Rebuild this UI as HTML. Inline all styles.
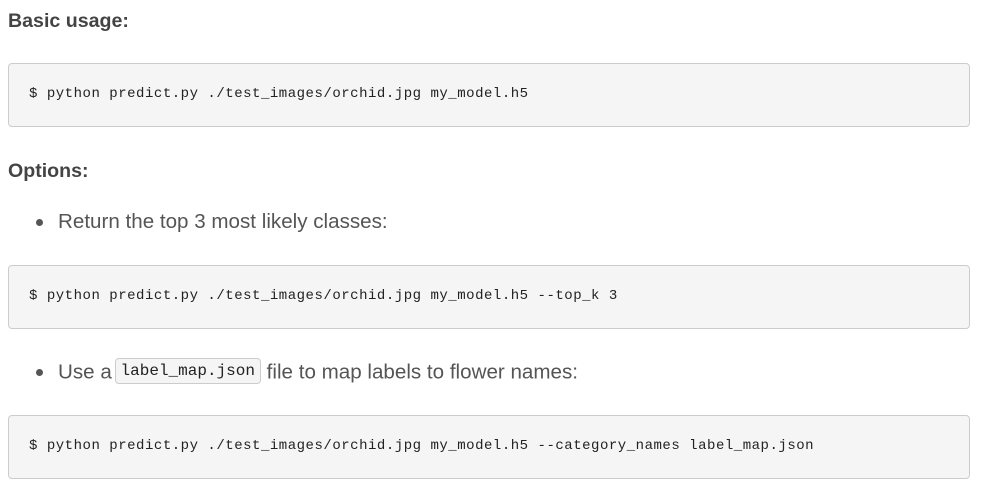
<!DOCTYPE html>
<html><head><style>
body{margin:0;background:#fff;width:986px;height:492px;position:relative;overflow:hidden;font-family:"Liberation Sans",sans-serif}
.h{position:absolute;left:8px;font-weight:bold;font-size:19.6px;color:#444}
.pre{position:absolute;left:8px;width:962px;height:64px;background:#f5f5f5;border:1px solid #ccc;border-radius:4px;box-sizing:border-box}
.pre span{position:absolute;left:20px;top:22px;font-family:"Liberation Mono",monospace;font-size:14px;letter-spacing:0.52px;color:#222;white-space:pre}
.li{position:absolute;left:58px;font-size:20.6px;color:#555;white-space:nowrap}
.dot{position:absolute;left:36px;width:7px;height:7px;border-radius:50%;background:#555}
.code{display:inline-block;font-family:"Liberation Mono",monospace;font-size:16px;background:#f5f5f5;border:1px solid #ccc;border-radius:4px;padding:3px 5px;color:#222;vertical-align:middle;position:relative;top:-2px;margin-left:-3px}
</style></head><body>
<div class="h" style="top:10px">Basic usage:</div>
<div class="pre" style="top:63px"><span>$ python predict.py ./test_images/orchid.jpg my_model.h5</span></div>
<div class="h" style="top:160px">Options:</div>
<div class="dot" style="top:219px"></div>
<div class="li" style="top:210px">Return the top 3 most likely classes:</div>
<div class="pre" style="top:265px"><span>$ python predict.py ./test_images/orchid.jpg my_model.h5 --top_k 3</span></div>
<div class="dot" style="top:369px"></div>
<div class="li" style="top:360px">Use a <span class="code">label_map.json</span> file to map labels to flower names:</div>
<div class="pre" style="top:415px"><span>$ python predict.py ./test_images/orchid.jpg my_model.h5 --category_names label_map.json</span></div>
</body></html>
